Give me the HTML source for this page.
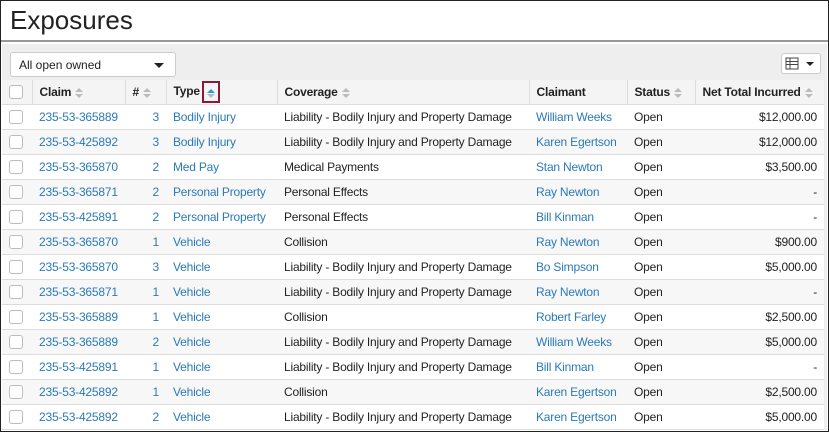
<!DOCTYPE html>
<html><head><style>
*{margin:0;padding:0;box-sizing:border-box}
body{width:829px;height:432px;overflow:hidden;background:#fff;font-family:"Liberation Sans",sans-serif;position:relative}
.frame{position:absolute;left:0;top:0;width:829px;height:432px;border:1px solid #222;z-index:5;pointer-events:none}
.title{position:absolute;left:10px;top:5px;font-size:26px;color:#222}
.hr{position:absolute;left:1px;right:1px;top:40px;height:2px;background:#999}
.bar{position:absolute;left:2px;right:2px;top:44px;height:386px;background:#eee}
.sel{position:absolute;left:10px;top:52px;width:166px;height:25px;background:#fff;border:1px solid #ccc;border-radius:3px;font-size:12px;color:#222;padding:5px 8px}
.sel:after{content:"";position:absolute;right:11px;top:10px;border:5px solid transparent;border-top:5px solid #222;border-bottom:0}
.gb{position:absolute;left:781px;top:53px;width:40px;height:21px;background:#fff;border:1px solid #ccc;border-radius:3px}
table{position:absolute;left:2px;top:80px;width:822px;table-layout:fixed;border-collapse:collapse;font-size:12px;color:#222;letter-spacing:-0.2px}
td,th{height:25px;padding:0 7px;white-space:nowrap;overflow:hidden;border-bottom:1px solid #ddd}
th{background:#f4f4f4;font-weight:bold;text-align:left;border-left:1px solid #ddd;height:24px}
th:first-child{border-left:none}
tr td{background:#fff}
tr:nth-child(odd) td{background:#f7f7f7}
a{color:#2a7ab8;text-decoration:none}
.cb{display:inline-block;width:14px;height:14px;border:1px solid #bbb;border-radius:3px;background:#fff;vertical-align:middle}
.s{display:inline-block;width:8px;height:12px;position:relative;vertical-align:middle;margin-left:4px}
.s:before,.s:after{content:"";position:absolute;left:0;border:4px solid transparent}
.s:before{top:-3px;border-bottom:4px solid #bbb}
.s:after{top:7px;border-top:4px solid #bbb}
.r{text-align:right}
</style></head><body>
<div class="frame"></div>
<div class="title">Exposures</div>
<div class="hr"></div>
<div class="bar"></div>
<div class="sel">All open owned</div>
<div class="gb"><svg width="40" height="21"><rect x="4" y="4" width="12" height="11" fill="none" stroke="#444"/><path d="M4 7.5h12M4 10.5h12M8 4v11" stroke="#444"/><path d="M24 8h8l-4 4z" fill="#222"/></svg></div>
<table>
<colgroup><col style="width:30px"><col style="width:93px"><col style="width:41px"><col style="width:111px"><col style="width:252px"><col style="width:98px"><col style="width:68px"><col style="width:129px"></colgroup>
<tr><th><span class="cb"></span></th><th>Claim<span class="s"></span></th><th>#<span class="s"></span></th><th>Type<span style="display:inline-block;border:2px solid #8b1a3a;width:18px;height:22px;vertical-align:middle;position:relative;margin-left:2px"><span style="position:absolute;left:3px;top:2px;border:4px solid transparent;border-bottom:4px solid #2a9ad8"></span><span style="position:absolute;left:3px;top:11px;border:4px solid transparent;border-top:4px solid #bbb"></span></span></th><th>Coverage<span class="s"></span></th><th>Claimant</th><th>Status<span class="s"></span></th><th>Net Total Incurred<span class="s"></span></th></tr>
<tr><td><span class="cb"></span></td><td><a>235-53-365889</a></td><td class="r"><a>3</a></td><td><a>Bodily Injury</a></td><td>Liability - Bodily Injury and Property Damage</td><td><a>William Weeks</a></td><td>Open</td><td class="r">$12,000.00</td></tr>
<tr><td><span class="cb"></span></td><td><a>235-53-425892</a></td><td class="r"><a>3</a></td><td><a>Bodily Injury</a></td><td>Liability - Bodily Injury and Property Damage</td><td><a>Karen Egertson</a></td><td>Open</td><td class="r">$12,000.00</td></tr>
<tr><td><span class="cb"></span></td><td><a>235-53-365870</a></td><td class="r"><a>2</a></td><td><a>Med Pay</a></td><td>Medical Payments</td><td><a>Stan Newton</a></td><td>Open</td><td class="r">$3,500.00</td></tr>
<tr><td><span class="cb"></span></td><td><a>235-53-365871</a></td><td class="r"><a>2</a></td><td><a>Personal Property</a></td><td>Personal Effects</td><td><a>Ray Newton</a></td><td>Open</td><td class="r">-</td></tr>
<tr><td><span class="cb"></span></td><td><a>235-53-425891</a></td><td class="r"><a>2</a></td><td><a>Personal Property</a></td><td>Personal Effects</td><td><a>Bill Kinman</a></td><td>Open</td><td class="r">-</td></tr>
<tr><td><span class="cb"></span></td><td><a>235-53-365870</a></td><td class="r"><a>1</a></td><td><a>Vehicle</a></td><td>Collision</td><td><a>Ray Newton</a></td><td>Open</td><td class="r">$900.00</td></tr>
<tr><td><span class="cb"></span></td><td><a>235-53-365870</a></td><td class="r"><a>3</a></td><td><a>Vehicle</a></td><td>Liability - Bodily Injury and Property Damage</td><td><a>Bo Simpson</a></td><td>Open</td><td class="r">$5,000.00</td></tr>
<tr><td><span class="cb"></span></td><td><a>235-53-365871</a></td><td class="r"><a>1</a></td><td><a>Vehicle</a></td><td>Liability - Bodily Injury and Property Damage</td><td><a>Ray Newton</a></td><td>Open</td><td class="r">-</td></tr>
<tr><td><span class="cb"></span></td><td><a>235-53-365889</a></td><td class="r"><a>1</a></td><td><a>Vehicle</a></td><td>Collision</td><td><a>Robert Farley</a></td><td>Open</td><td class="r">$2,500.00</td></tr>
<tr><td><span class="cb"></span></td><td><a>235-53-365889</a></td><td class="r"><a>2</a></td><td><a>Vehicle</a></td><td>Liability - Bodily Injury and Property Damage</td><td><a>William Weeks</a></td><td>Open</td><td class="r">$5,000.00</td></tr>
<tr><td><span class="cb"></span></td><td><a>235-53-425891</a></td><td class="r"><a>1</a></td><td><a>Vehicle</a></td><td>Liability - Bodily Injury and Property Damage</td><td><a>Bill Kinman</a></td><td>Open</td><td class="r">-</td></tr>
<tr><td><span class="cb"></span></td><td><a>235-53-425892</a></td><td class="r"><a>1</a></td><td><a>Vehicle</a></td><td>Collision</td><td><a>Karen Egertson</a></td><td>Open</td><td class="r">$2,500.00</td></tr>
<tr><td><span class="cb"></span></td><td><a>235-53-425892</a></td><td class="r"><a>2</a></td><td><a>Vehicle</a></td><td>Liability - Bodily Injury and Property Damage</td><td><a>Karen Egertson</a></td><td>Open</td><td class="r">$5,000.00</td></tr>
</table>
</body></html>
